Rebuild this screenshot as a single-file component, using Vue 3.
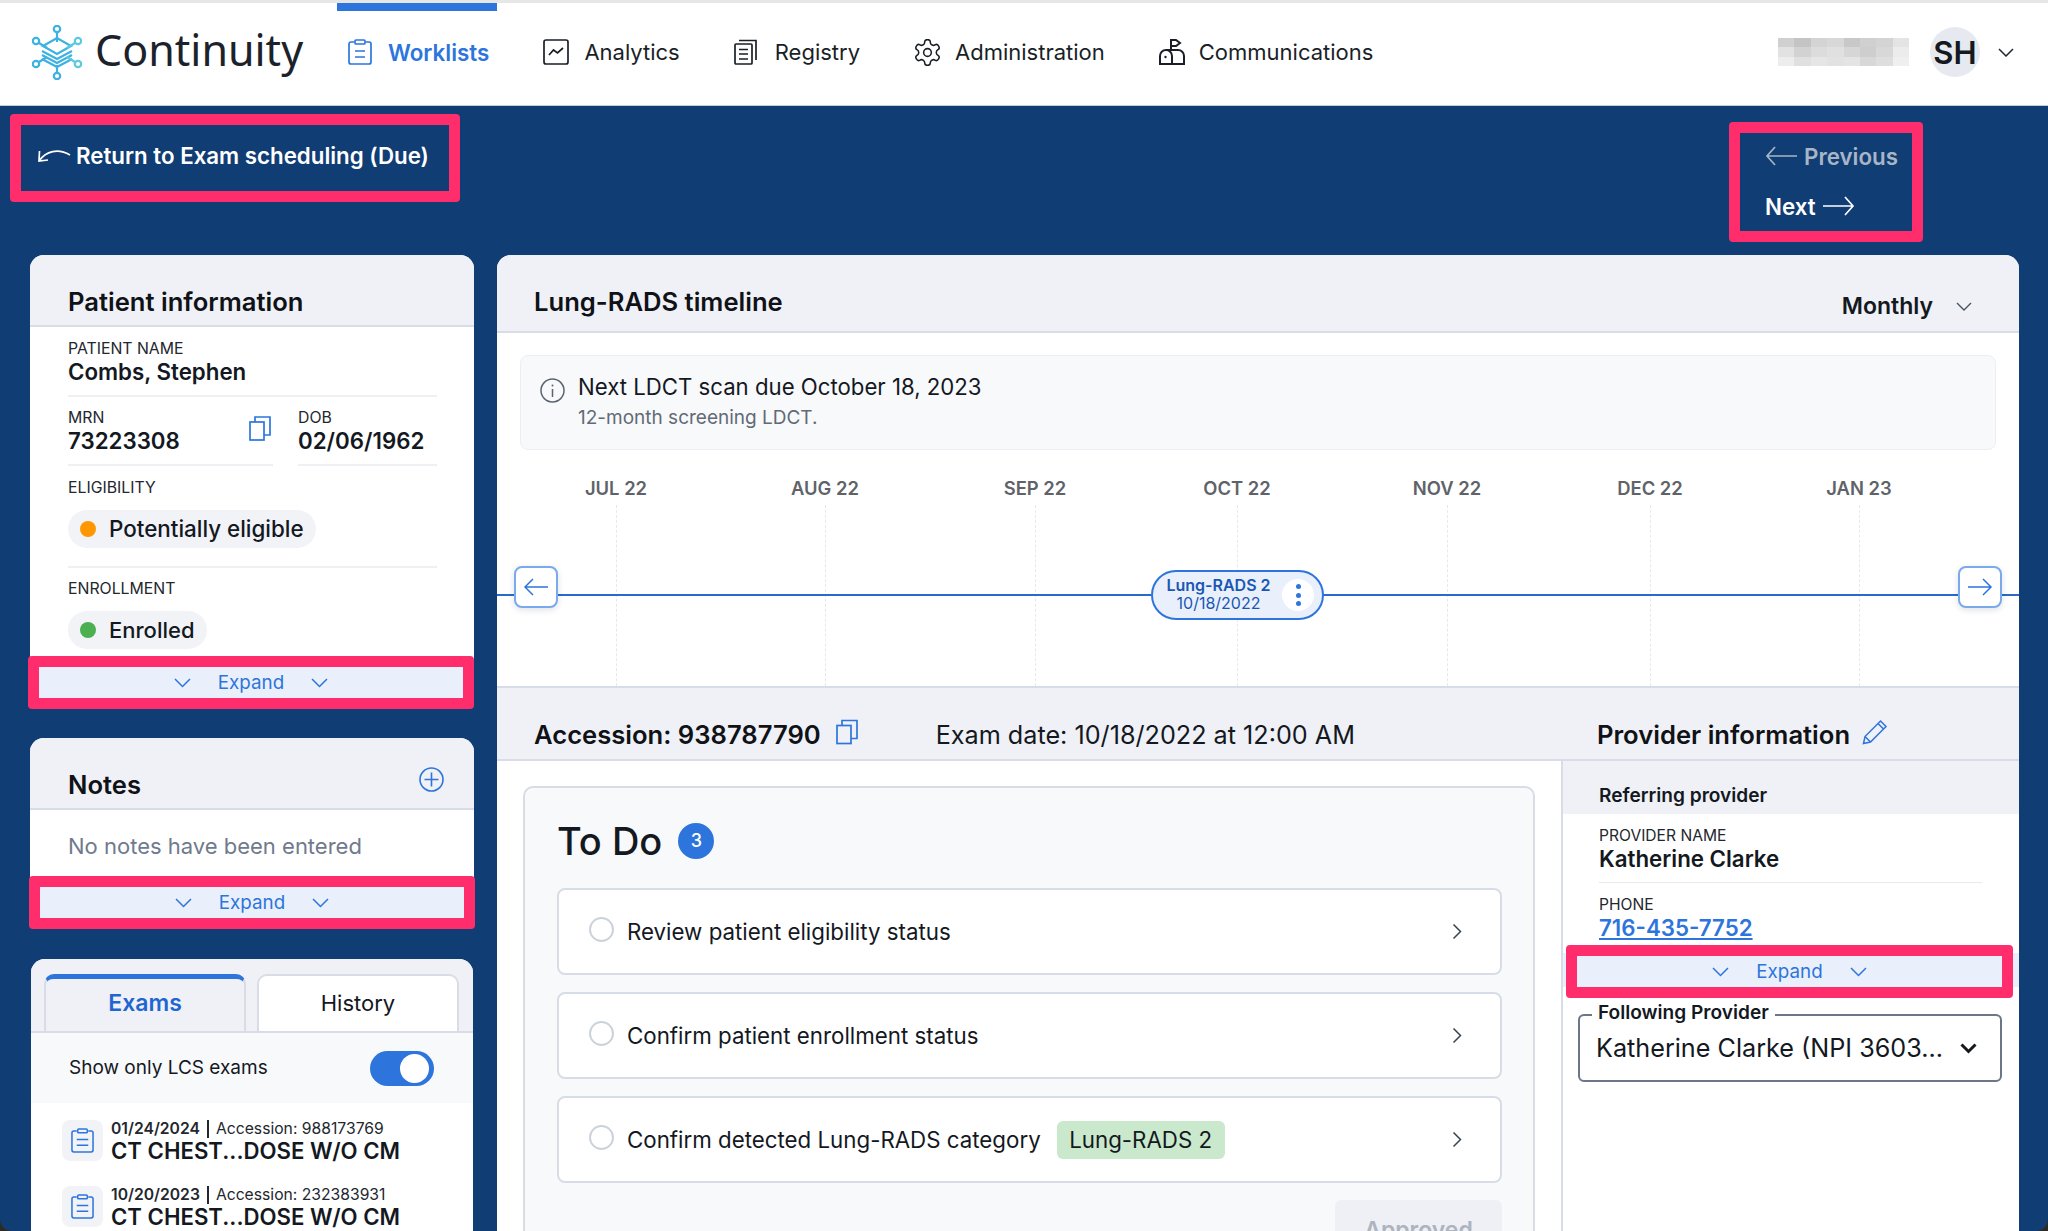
<script setup>
const navItems = [
  { label: 'Worklists', icon: 'clip', active: true },
  { label: 'Analytics', icon: 'chart' },
  { label: 'Registry', icon: 'docs' },
  { label: 'Administration', icon: 'gear' },
  { label: 'Communications', icon: 'mail' },
]
const months = [
  { label: 'JUL 22', x: 119 },
  { label: 'AUG 22', x: 328 },
  { label: 'SEP 22', x: 538 },
  { label: 'OCT 22', x: 740 },
  { label: 'NOV 22', x: 950 },
  { label: 'DEC 22', x: 1153 },
  { label: 'JAN 23', x: 1362 },
]
const exams = [
  { date: '01/24/2024', acc: '988173769' },
  { date: '10/20/2023', acc: '232383931' },
]
const todos = [
  { text: 'Review patient eligibility status' },
  { text: 'Confirm patient enrollment status' },
  { text: 'Confirm detected Lung-RADS category', tag: 'Lung-RADS 2' },
]
const mosaic = [
  ['#d0d0d0','#c4c4c4','#d4d4d4','#d8d8d8','#c8c8c8','#d0d0d0','#d4d4d4','#e4e4e4'],
  ['#e2e2e2','#d2d2d2','#dcdcdc','#e0e0e0','#d6d6d6','#cecece','#d8d8d8','#ececec'],
  ['#ededed','#e0e0e0','#e6e6e6','#e2e2e2','#e4e4e4','#d8d8d8','#dedede','#efefef'],
]
</script>

<template>
  <div class="page">
    <header class="topbar">
      <div class="logo">
        <svg class="logo-mark" width="50" height="55" viewBox="0 0 50 55" fill="none" stroke-width="2.2">
          <g stroke="#3db2e2">
            <circle cx="25" cy="4" r="3.2" />
            <circle cx="4" cy="16" r="3.2" />
            <circle cx="4" cy="39" r="3.2" />
            <circle cx="25" cy="51" r="3.2" />
            <path d="M25 7v10M7 18l8 5M7 37l8-5M25 48v-8" />
            <path d="M11 21l14-8 14 8-14 8zM10 26l15 8 15-8M10 30l15 8 15-8M10 34l15 8 15-8" />
          </g>
          <g stroke="#5cc9df">
            <circle cx="46" cy="16" r="3.2" />
            <circle cx="46" cy="39" r="3.2" />
            <path d="M43 18l-8 5M43 37l-8-5" />
          </g>
        </svg>
        <span class="logo-text">Continuity</span>
      </div>
      <nav class="nav">
        <a v-for="item in navItems" :key="item.label" class="nav-item" :class="[item.icon, { active: item.active }]">
          <svg v-if="item.icon === 'clip'" width="24" height="26" viewBox="0 0 24 26" fill="none" stroke="currentColor" stroke-width="1.7">
            <path d="M6 3H3a2 2 0 0 0-2 2v18a2 2 0 0 0 2 2h18a2 2 0 0 0 2-2V5a2 2 0 0 0-2-2h-3" />
            <rect x="7" y="1" width="10" height="4" rx="1" />
            <path d="M7 12h10M7 18h10" />
          </svg>
          <svg v-else-if="item.icon === 'chart'" width="26" height="26" viewBox="0 0 26 26" fill="none" stroke="currentColor" stroke-width="1.7">
            <rect x="1" y="1" width="24" height="24" rx="2" />
            <path d="M6 16l4.500-5 4 3 5.500-5" />
          </svg>
          <svg v-else-if="item.icon === 'docs'" width="23" height="26" viewBox="0 0 23 26" fill="none" stroke="currentColor" stroke-width="1.7">
            <rect x="1" y="5" width="17" height="20" rx="1" />
            <path d="M5 1.500h17V21M5 10.500h9M5 15h9M5 20h9" />
          </svg>
          <svg v-else-if="item.icon === 'gear'" width="27" height="27" viewBox="1.500 1.500 21 21" fill="none" stroke="currentColor" stroke-width="1.200">
            <path d="M12.220 2h-.44a2 2 0 0 0-2 2v.18a2 2 0 0 1-1 1.730l-.43.25a2 2 0 0 1-2 0l-.15-.08a2 2 0 0 0-2.730.73l-.22.38a2 2 0 0 0 .73 2.730l.15.1a2 2 0 0 1 1 1.720v.51a2 2 0 0 1-1 1.740l-.15.09a2 2 0 0 0-.73 2.730l.22.38a2 2 0 0 0 2.730.73l.15-.08a2 2 0 0 1 2 0l.43.25a2 2 0 0 1 1 1.730V20a2 2 0 0 0 2 2h.44a2 2 0 0 0 2-2v-.18a2 2 0 0 1 1-1.730l.43-.25a2 2 0 0 1 2 0l.15.08a2 2 0 0 0 2.730-.73l.22-.39a2 2 0 0 0-.73-2.730l-.15-.08a2 2 0 0 1-1-1.740v-.5a2 2 0 0 1 1-1.740l.15-.09a2 2 0 0 0 .73-2.730l-.22-.38a2 2 0 0 0-2.730-.73l-.15.08a2 2 0 0 1-2 0l-.43-.25a2 2 0 0 1-1-1.730V4a2 2 0 0 0-2-2z" />
            <circle cx="12" cy="12" r="3" />
          </svg>
          <svg v-else width="26" height="26" viewBox="0 0 26 26" fill="none" stroke="currentColor" stroke-width="2">
            <path d="M12 12V1h5l4 3-4 3h-5" />
            <path d="M7 11h12a6 6 0 0 1 6 6v8H1v-8a6 6 0 0 1 6-6zM13 25v-8a6 6 0 0 0-6-6" />
            <circle cx="6.500" cy="18" r="1.200" fill="currentColor" stroke="none" />
          </svg>
          <span>{{ item.label }}</span>
        </a>
      </nav>
      <div class="user">
        <svg class="blur" width="131" height="28" viewBox="0 0 8 3" preserveAspectRatio="none" shape-rendering="crispEdges">
          <g v-for="(row, r) in mosaic" :key="r">
            <rect v-for="(c, i) in row" :key="i" :x="i" :y="r" width="1" height="1" :fill="c" />
          </g>
        </svg>
        <div class="avatar">SH</div>
        <svg width="16" height="9" viewBox="0 0 16 9" fill="none" stroke="#20262e" stroke-width="1.500"><path d="M1 1l7 7 7-7" /></svg>
      </div>
    </header>

    <div class="subbar">
      <a class="annot return">
        <svg width="34" height="15" viewBox="0 0 34 15" fill="none" stroke="#fff" stroke-width="1.700">
          <path d="M2.500 3L2 13l9-1M2 13C9 3 21 0 33 7" />
        </svg>
        <span>Return to Exam scheduling (Due)</span>
      </a>
      <div class="annot pager">
        <a class="pager-row muted">
          <svg width="33" height="20" viewBox="0 0 33 20" fill="none" stroke="currentColor" stroke-width="1.700"><path d="M32 10H2M10 1l-8 9 8 9" /></svg>
          <span>Previous</span>
        </a>
        <a class="pager-row">
          <span>Next</span>
          <svg width="33" height="20" viewBox="0 0 33 20" fill="none" stroke="currentColor" stroke-width="1.700"><path d="M1 10h30M23 1l8 9-8 9" /></svg>
        </a>
      </div>
    </div>

    <div class="columns">
      <aside class="side">
        <section class="card patient">
          <div class="card-head"><h2>Patient information</h2></div>
          <div class="card-body">
            <div class="field ruled">
              <div class="label">PATIENT NAME</div>
              <div class="value">Combs, Stephen</div>
            </div>
            <div class="pair">
              <div class="field ruled">
                <div class="label">MRN</div>
                <div class="value">73223308</div>
                <svg class="copy mrn-copy" width="22" height="25" viewBox="0 0 22 25" fill="none" stroke="#2d75dd" stroke-width="1.700">
                  <rect x="1" y="6" width="14" height="18" />
                  <path d="M6 6V1h15v18h-6" />
                </svg>
              </div>
              <div class="field ruled">
                <div class="label">DOB</div>
                <div class="value">02/06/1962</div>
              </div>
            </div>
            <div class="status ruled">
              <div class="label">ELIGIBILITY</div>
              <div class="pill"><i class="dot orange"></i>Potentially eligible</div>
            </div>
            <div class="status">
              <div class="label">ENROLLMENT</div>
              <div class="pill"><i class="dot green"></i>Enrolled</div>
            </div>
          </div>
          <button class="expand shift-2">
            <svg width="17" height="10" viewBox="0 0 17 10" fill="none" stroke="currentColor" stroke-width="1.500"><path d="M1 1l7.500 7.500L16 1" /></svg>
            <span>Expand</span>
            <svg width="17" height="10" viewBox="0 0 17 10" fill="none" stroke="currentColor" stroke-width="1.500"><path d="M1 1l7.500 7.500L16 1" /></svg>
          </button>
        </section>

        <section class="card notes">
          <div class="card-head notes-head">
            <h2>Notes</h2>
            <svg width="25" height="25" viewBox="0 0 25 25" fill="none" stroke="#2d75dd" stroke-width="1.600">
              <circle cx="12.500" cy="12.500" r="11.500" />
              <path d="M12.500 5.500v14M5.500 12.500h14" />
            </svg>
          </div>
          <p class="empty">No notes have been entered</p>
          <button class="expand shift-1">
            <svg width="17" height="10" viewBox="0 0 17 10" fill="none" stroke="currentColor" stroke-width="1.500"><path d="M1 1l7.500 7.500L16 1" /></svg>
            <span>Expand</span>
            <svg width="17" height="10" viewBox="0 0 17 10" fill="none" stroke="currentColor" stroke-width="1.500"><path d="M1 1l7.500 7.500L16 1" /></svg>
          </button>
        </section>

        <section class="card exams">
          <div class="tabs">
            <a class="tab on">Exams</a>
            <a class="tab">History</a>
          </div>
          <div class="filter">
            <span>Show only LCS exams</span>
            <span class="toggle"><i></i></span>
          </div>
          <ul class="exam-list">
            <li v-for="e in exams" :key="e.acc" class="exam">
              <span class="tile">
                <svg width="23" height="25" viewBox="0 0 24 26" fill="none" stroke="#2d75dd" stroke-width="1.600">
                  <path d="M6 3H3a2 2 0 0 0-2 2v18a2 2 0 0 0 2 2h18a2 2 0 0 0 2-2V5a2 2 0 0 0-2-2h-3" />
                  <rect x="7" y="1" width="10" height="4" rx="1" />
                  <path d="M6 12h12M6 18h12" />
                </svg>
              </span>
              <div>
                <div class="exam-meta"><b>{{ e.date }}</b><i class="bar"></i>Accession: {{ e.acc }}</div>
                <div class="exam-name">CT CHEST...DOSE W/O CM</div>
              </div>
            </li>
          </ul>
        </section>
      </aside>

      <main class="main">
        <div class="main-head">
          <h2>Lung-RADS timeline</h2>
          <div class="range">
            <span>Monthly</span>
            <svg width="16" height="9" viewBox="0 0 16 9" fill="none" stroke="#4a5360" stroke-width="1.400"><path d="M1 1l7 7 7-7" /></svg>
          </div>
        </div>

        <div class="notice">
          <svg width="25" height="25" viewBox="0 0 25 25" fill="none" stroke="#5d6470" stroke-width="1.500">
            <circle cx="12.500" cy="12.500" r="11.500" />
            <path d="M12.500 11v8" />
            <circle cx="12.500" cy="7.500" r="1" fill="#5d6470" stroke="none" />
          </svg>
          <div>
            <div class="notice-title">Next LDCT scan due October 18, 2023</div>
            <div class="notice-sub">12-month screening LDCT.</div>
          </div>
        </div>

        <div class="timeline">
          <template v-for="m in months" :key="m.label">
            <span class="month" :style="{ left: m.x + 'px' }">{{ m.label }}</span>
            <i class="tick" :style="{ left: m.x + 'px' }"></i>
          </template>
          <i class="axis"></i>
          <button class="tl-btn prev">
            <svg width="26" height="20" viewBox="0 0 26 20" fill="none" stroke="#2d75dd" stroke-width="1.500"><path d="M25 10H2M10 2l-8 8 8 8" /></svg>
          </button>
          <button class="tl-btn next">
            <svg width="26" height="20" viewBox="0 0 26 20" fill="none" stroke="#2d75dd" stroke-width="1.500"><path d="M1 10h23M16 2l8 8-8 8" /></svg>
          </button>
          <div class="marker">
            <div class="marker-text">
              <b>Lung-RADS 2</b>
              <span>10/18/2022</span>
            </div>
            <span class="kebab"><i></i><i></i><i></i></span>
          </div>
        </div>

        <div class="exam-head">
          <div class="exam-head-left">
            <strong>Accession: 938787790</strong>
            <svg width="22" height="26" viewBox="0 0 22 25" fill="none" stroke="#2d75dd" stroke-width="1.700">
              <rect x="1" y="6" width="14" height="18" />
              <path d="M6 6V1h15v18h-6" />
            </svg>
            <span class="exam-date">Exam date: 10/18/2022 at 12:00 AM</span>
          </div>
          <div class="exam-head-right">
            <strong>Provider information</strong>
            <svg width="26" height="26" viewBox="0 0 26 26" fill="none" stroke="#2d75dd" stroke-width="1.500">
              <path d="M1.500 24.500l1.500-7L18.500 2l5.500 5.500L8.500 23zM3 17.500L8.500 23M16 4.500l5.500 5.500" />
            </svg>
          </div>
        </div>

        <div class="detail">
          <div class="todo-pane">
            <section class="todo">
              <h3>To Do <span class="count">3</span></h3>
              <div v-for="t in todos" :key="t.text" class="todo-row">
                <i class="radio"></i>
                <span>{{ t.text }}</span>
                <span v-if="t.tag" class="tag">{{ t.tag }}</span>
                <svg class="chev" width="10" height="17" viewBox="0 0 10 17" fill="none" stroke="#3b434e" stroke-width="1.500"><path d="M1.500 1.500l7 7-7 7" /></svg>
              </div>
              <div class="actions"><button class="approve">Approved</button></div>
            </section>
          </div>
          <div class="provider">
            <div class="prov-head">Referring provider</div>
            <div class="prov-body">
              <div class="prov-field ruled-thin">
                <div class="label">PROVIDER NAME</div>
                <div class="value">Katherine Clarke</div>
              </div>
              <div class="prov-field">
                <div class="label">PHONE</div>
                <a class="value phone">716-435-7752</a>
              </div>
            </div>
            <div class="prov-expand">
              <button class="expand">
                <svg width="17" height="10" viewBox="0 0 17 10" fill="none" stroke="currentColor" stroke-width="1.500"><path d="M1 1l7.500 7.500L16 1" /></svg>
                <span>Expand</span>
                <svg width="17" height="10" viewBox="0 0 17 10" fill="none" stroke="currentColor" stroke-width="1.500"><path d="M1 1l7.500 7.500L16 1" /></svg>
              </button>
            </div>
            <div class="select">
              <span class="legend">Following Provider</span>
              <span class="select-value">Katherine Clarke (NPI 3603...</span>
              <svg width="17" height="11" viewBox="0 0 17 11" fill="none" stroke="#14181f" stroke-width="3"><path d="M1.500 1.500l7 7 7-7" /></svg>
            </div>
          </div>
        </div>
      </main>
    </div>
  </div>
</template>

<style>
html, body { margin: 0; background: #2e2a24; }
</style>

<style scoped>
* { box-sizing: border-box; }
h2, h3, p, ul { margin: 0; padding: 0; }
button { font: inherit; }
.page {
  width: 2048px; height: 1231px; overflow: hidden; background: #103d73;
  border-radius: 0 0 12px 12px;
  font-family: Inter, "Liberation Sans", sans-serif; color: #14181f;
}
.topbar {
  height: 106px; display: flex; align-items: stretch; background: #fff;
  border-top: 3px solid #e6e6e6; border-bottom: 1px solid #c3cddb;
}
.logo { width: 337px; display: flex; align-items: center; padding: 0 0 4px 32px; gap: 13px; flex: none; }
.logo-text { font-family: "Noto Sans", sans-serif; font-size: 43px; line-height: 1; color: #1c222b; margin-bottom: 5px; }
.nav { display: flex; gap: 33px; }
.nav-item {
  display: flex; align-items: center; gap: 15px; padding: 0 10px 12px 11px;
  border-top: 8px solid transparent; font-size: 22px; color: #1a1f27;
}
.nav-item.active { color: #2d75dd; font-size: 22.400px; font-weight: 600; border-top-color: #2d75dd; gap: 16px; padding-right: 8px; margin-right: 2px; }
.nav-item.docs { gap: 18px; }
.nav-item.gear, .nav-item.mail { gap: 14px; }
.user { margin-left: auto; display: flex; align-items: center; padding: 0 34px 4px 0; }
.blur { flex: none; }
.avatar {
  width: 50px; height: 50px; margin: 0 18px 0 21px; border-radius: 50%; background: #e6eaf0;
  display: flex; align-items: center; justify-content: center; font-size: 31px; font-weight: 600;
}

.subbar { height: 149px; display: flex; justify-content: space-between; align-items: flex-start; padding: 8px 125px 0 10px; }
.annot { border: 11px solid #ff2d6b; border-radius: 4px; color: #fff; font-size: 22.300px; font-weight: 600; }
.return { width: 450px; height: 88px; display: flex; align-items: center; gap: 5px; padding: 0 0 5px 16px; }
.pager { width: 194px; height: 120px; margin-top: 8px; padding-left: 25px; display: flex; flex-direction: column; gap: 4px; }
.pager-row { height: 46px; display: flex; align-items: center; gap: 6px; }
.muted { color: #a8b5c7; }

.columns { display: flex; gap: 23px; padding: 0 29px 0 30px; }
.side { width: 444px; flex: none; display: flex; flex-direction: column; gap: 43px; }
.card { background: #fff; border-radius: 14px 14px 0 0; }
.patient { height: 440px; }
.notes { height: 178px; }
.card-head { padding: 31px 30px 7px 38px; background: #eff1f6; border-bottom: 2px solid #d8dce6; border-radius: 14px 14px 0 0; }
.card-head h2, .main-head h2 { font-size: 25.600px; line-height: 32px; font-weight: 600; color: #0f1217; }
.card-body { padding: 1px 37px 0 38px; }
.label { font-size: 15.800px; line-height: 18px; color: #23272e; }
.value { font-size: 22.300px; line-height: 26px; font-weight: 600; margin-top: 1px; color: #14181f; }
.field { padding: 12px 0 10px; position: relative; }
.ruled { border-bottom: 2px solid #eef0f4; }
.pair { display: grid; grid-template-columns: 205px 139px; column-gap: 25px; }
.mrn-copy { position: absolute; right: 2px; top: 19px; }
.status { padding-top: 13px; }
.status.ruled { padding-bottom: 18px; }
.status:not(.ruled) { padding-top: 12px; }
.pill {
  display: inline-flex; align-items: center; height: 38px; margin-top: 13px; padding: 0 12px 1px; border-radius: 19px;
  background: #f1f3f7; font-size: 22px; font-weight: 500; white-space: nowrap; vertical-align: top;
}
.status.ruled .pill { display: flex; width: 248px; font-size: 22.400px; }
.dot { width: 16px; height: 16px; border-radius: 50%; margin-right: 13px; }
.orange { background: #ff9800; }
.green { background: #4caf50; }

.expand {
  height: 53px; width: 446px; border: 11px solid #ff2d6b; border-radius: 4px;
  background: #e9f0fb; color: #2d75dd; display: flex; align-items: center; justify-content: center; gap: 27px;
  font-size: 18.800px; padding: 0; position: relative;
}
.patient .expand { margin-top: 7px; }
.shift-2 { margin-left: -2px; }
.shift-1 { margin-left: -1px; }

.notes-head { display: flex; justify-content: space-between; align-items: flex-start; }
.notes-head svg { margin-top: -2px; }
.empty { padding: 22px 38px 15px; font-size: 22px; line-height: 29px; color: #6f7a8c; }

.exams { margin: 0 1px; height: 400px; background: #fff; border-radius: 14px 14px 0 0; overflow: hidden; }
.tabs { background: #eff1f6; display: flex; gap: 11px; padding: 15px 13px 0; border-bottom: 2px solid #d8dce6; }
.tab {
  width: 202px; height: 57px; padding-bottom: 2px; background: #fff; border: 2px solid #d8dce6; border-bottom: 0; border-radius: 10px 10px 0 0;
  display: flex; align-items: center; justify-content: center; font-size: 22px;
}
.tab.on { background: #eff1f6; border-top: 5px solid #2d75dd; color: #1f66d1; font-size: 23px; font-weight: 600; padding-bottom: 5px; }
.filter { height: 70px; padding: 0 39px 0 38px; background: #f8f9fb; display: flex; align-items: center; justify-content: space-between; font-size: 19px; }
.filter > span:first-child { margin-bottom: 2px; }
.toggle { width: 64px; height: 35px; border-radius: 18px; background: #2d75dd; display: flex; align-items: center; justify-content: flex-end; padding-right: 5px; }
.toggle i { width: 29px; height: 29px; border-radius: 50%; background: #fff; }
.exam-list { list-style: none; padding: 17px 0 0 31px; display: flex; flex-direction: column; gap: 25px; }
.exam { display: flex; gap: 8px; height: 41px; }
.tile { width: 41px; height: 41px; border-radius: 8px; background: #f1f3f7; display: flex; align-items: center; justify-content: center; flex: none; }
.exam-meta { display: flex; align-items: center; font-size: 15.700px; line-height: 18px; color: #23272e; }
.exam-meta b { font-weight: 600; }
.bar { width: 2px; height: 18px; background: #23272e; margin: 0 7px; }
.exam-name { font-size: 22.200px; line-height: 26px; font-weight: 600; white-space: nowrap; }

.main { flex: 1; min-width: 0; height: 976px; background: #fff; border-radius: 14px 14px 0 0; overflow: hidden; }
.main-head {
  height: 78px; background: #eff1f6; border-bottom: 2px solid #d8dce6; display: flex; justify-content: space-between;
  align-items: flex-start; padding: 31px 47px 0 37px;
}
.range { display: flex; align-items: center; gap: 23px; font-size: 23px; font-weight: 600; line-height: 32px; padding-top: 4px; }
.notice {
  height: 95px; margin: 22px 23px 0; background: #f8f9fb; border: 1px solid #eceef3; border-radius: 8px;
  display: flex; gap: 13px; padding: 16px 0 0 19px;
}
.notice > svg { margin-top: 6px; flex: none; }
.notice-title { font-size: 22.200px; line-height: 30px; }
.notice-sub { font-size: 19px; line-height: 28px; margin-top: 2px; color: #626a76; }
.timeline { position: relative; height: 236px; }
.month { position: absolute; top: 26px; transform: translateX(-50%); font-size: 18.400px; line-height: 24px; font-weight: 600; color: #5f6369; white-space: nowrap; }
.tick { position: absolute; top: 55px; bottom: 0; width: 0; border-left: 1px dashed #e8e8ea; }
.axis { position: absolute; left: 0; right: 0; top: 144px; height: 2px; background: #2a6ac8; }
.tl-btn {
  position: absolute; top: 116px; width: 44px; height: 42px; padding: 0; border: 2px solid #7aa9ec; border-radius: 8px; background: #fff;
  display: flex; align-items: center; justify-content: center; box-shadow: 0 2px 6px rgba(20, 40, 80, .14);
}
.prev { left: 17px; }
.next { left: 1461px; }
.marker {
  position: absolute; left: 654px; top: 120px; width: 173px; height: 50px; border: 2px solid #2d75dd; border-radius: 25px; background: #e9f0fb;
  display: flex; align-items: center; padding-left: 13px;
}
.marker-text { width: 105px; padding-bottom: 2px; display: flex; flex-direction: column; align-items: center; font-size: 16px; line-height: 18px; color: #1a57b5; }
.marker-text b { font-weight: 600; }
.kebab { width: 32px; height: 32px; margin-left: 11px; border-radius: 50%; background: #fff; display: flex; flex-direction: column; align-items: center; justify-content: center; gap: 3.500px; }
.kebab i { width: 5px; height: 5px; border-radius: 50%; background: #2d75dd; }

.exam-head { height: 75px; background: #eff1f6; border-top: 2px solid #d8dce6; border-bottom: 2px solid #d8dce6; display: flex; padding-top: 31px; }
.exam-head strong { font-size: 25.600px; line-height: 32px; font-weight: 600; color: #0f1217; }
.exam-head-left { width: 1066px; padding-left: 37px; display: flex; align-items: flex-start; }
.exam-head-left svg { margin: 0 0 0 15px; }
.exam-date { margin-left: 78px; font-size: 25.200px; line-height: 32px; }
.exam-head-right { display: flex; align-items: flex-start; gap: 12px; padding-left: 34px; }
.detail { display: flex; height: 500px; }
.todo-pane { width: 1066px; flex: none; padding: 25px 26px 0 26px; border-right: 2px solid #d8dce6; }
.todo { height: 600px; background: #f8f9fb; border: 2px solid #d8dce6; border-radius: 10px; padding: 30px 31px 0 32px; }
.todo h3 { display: flex; align-items: center; gap: 16px; font-size: 38px; line-height: 46px; font-weight: 500; margin-bottom: 24px; }
.count { width: 36px; height: 36px; border-radius: 50%; background: #2d75dd; color: #fff; font-size: 18px; display: flex; align-items: center; justify-content: center; }
.todo-row {
  height: 87px; margin-bottom: 17px; background: #fff; border: 2px solid #d8dce6; border-radius: 8px;
  display: flex; align-items: center; padding: 0 38px 0 30px; font-size: 22.300px;
}
.radio { width: 25px; height: 25px; margin: -5px 13px 0 0; border-radius: 50%; border: 2px solid #ccd2dc; background: #fff; }
.tag { margin-left: 16px; height: 38px; width: 168px; border-radius: 6px; background: #c9e8cc; display: flex; align-items: center; justify-content: center; }
.chev { margin-left: auto; }
.actions { display: flex; justify-content: flex-end; }
.approve { width: 167px; height: 60px; border: 0; border-radius: 6px; background: #eef0f5; color: #aeb4be; font-size: 23px; font-weight: 600; }

.provider { flex: 1; min-width: 0; }
.prov-head { height: 53px; background: #eff1f6; padding: 22px 0 0 36px; font-size: 19.100px; line-height: 24px; font-weight: 600; }
.prov-body { padding: 0 37px 0 36px; }
.prov-field { padding-top: 13px; }
.prov-field .label { font-size: 15.600px; }
.ruled-thin { padding-bottom: 10px; border-bottom: 1px solid #e6e9ef; }
.phone { display: block; color: #2d75dd; text-decoration: underline; }
.prov-expand {
  margin-top: 4px; padding: 0 6px 0 3px;
  background: linear-gradient(transparent 8px, #e9f0fb 8px, #e9f0fb 42px, transparent 42px);
}
.prov-expand .expand { width: 100%; }
.select {
  position: relative; height: 68px; margin: 16px 17px 0 15px; border: 2px solid #6b7688; border-radius: 6px;
  display: flex; align-items: center; justify-content: space-between; padding: 0 23px 0 16px;
}
.legend { position: absolute; left: 12px; top: -17px; padding: 0 6px; background: #fff; font-size: 19.100px; line-height: 26px; font-weight: 600; }
.select-value { font-size: 25.200px; white-space: nowrap; }
</style>
